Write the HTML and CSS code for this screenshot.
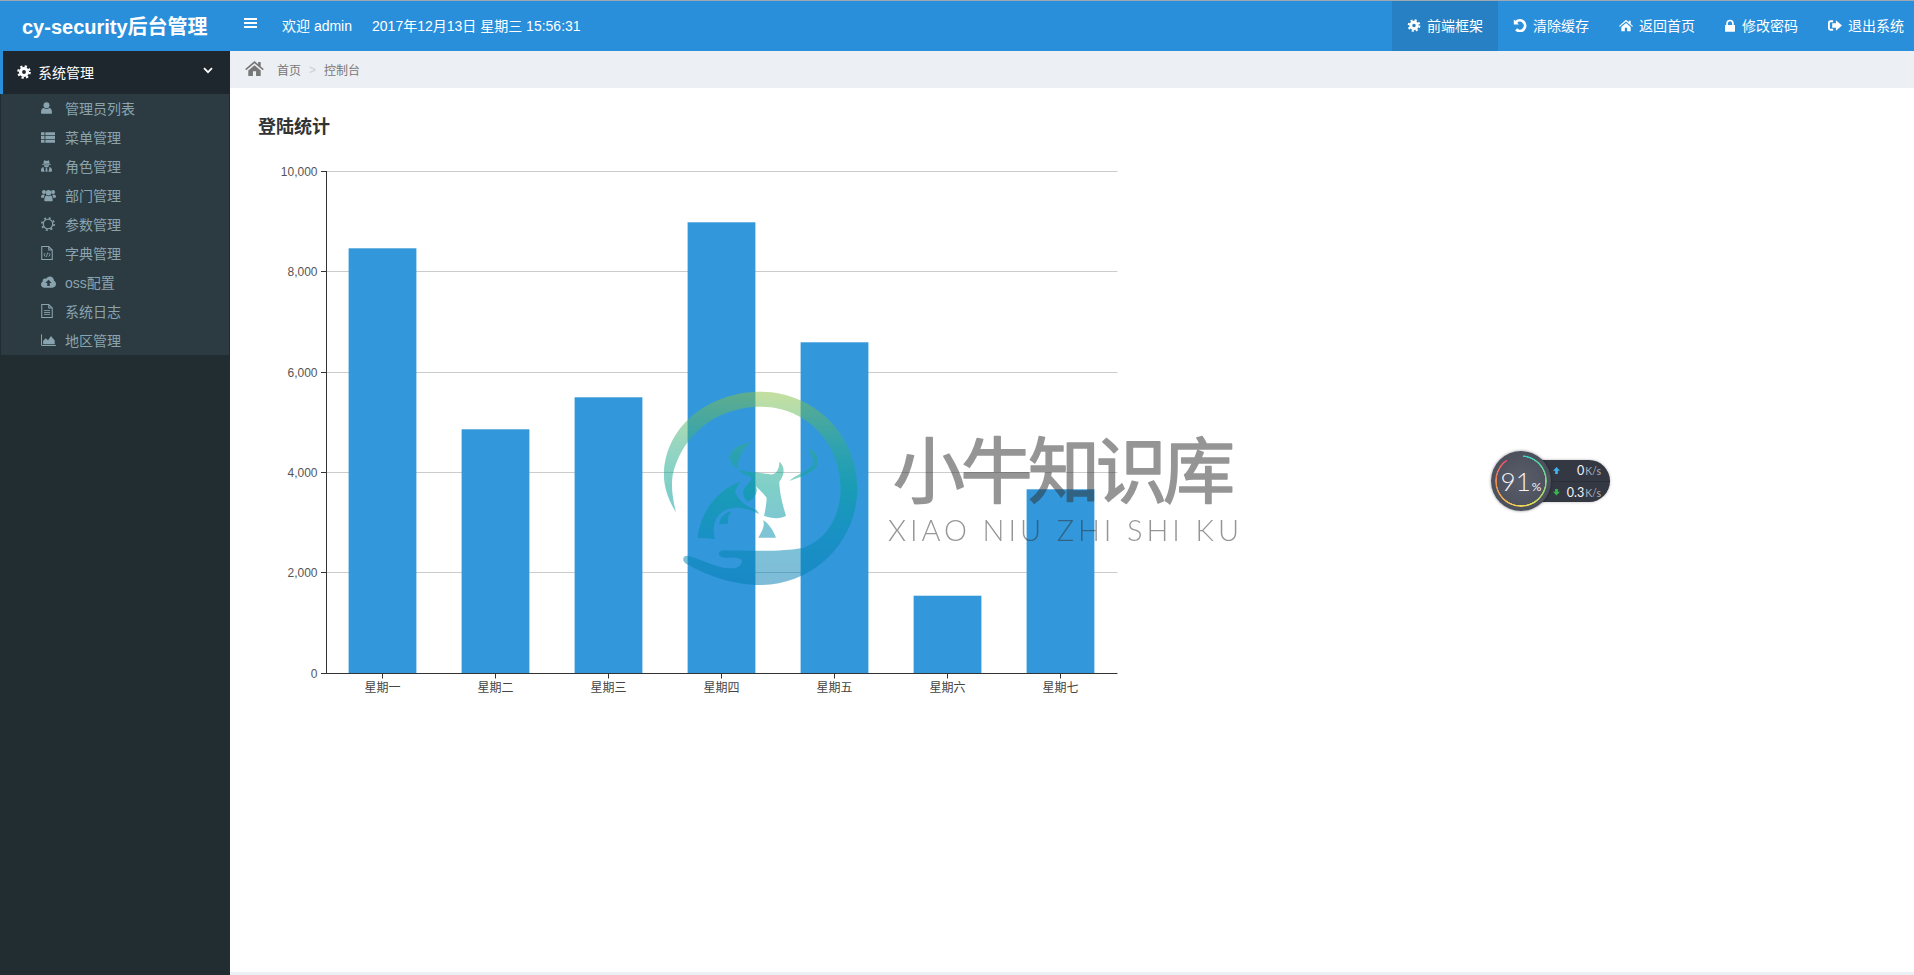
FILE: index.html
```html
<!DOCTYPE html>
<html lang="zh">
<head>
<meta charset="utf-8">
<title>cy-security后台管理</title>
<link rel="stylesheet" href="styles.css">
</head>
<body>
<svg class="defs" width="0" height="0" aria-hidden="true">
  <symbol id="i-gear" viewBox="0 0 16 16"><circle cx="8" cy="8" r="4" fill="none" stroke="currentColor" stroke-width="3.6"/><circle cx="8" cy="8" r="6.6" fill="none" stroke="currentColor" stroke-width="2.4" stroke-dasharray="2.6 2.58"/></symbol>
  <symbol id="i-user" viewBox="1 .8 14 14.400"><circle cx="8" cy="4.6" r="3.800" fill="currentColor"/><path d="M2 15.200c-.6 0-1-.5-1-1.200C1 10.600 2.300 8 4.600 8c1 .8 2.100 1.200 3.400 1.200S10.400 8.800 11.400 8C13.700 8 15 10.600 15 14c0 .7-.4 1.200-1 1.200z" fill="currentColor"/></symbol>
  <symbol id="i-list" viewBox="0 2 16 12"><path d="M0 2h4v3.400H0zM5 2h11v3.400H5zM0 6.300h4v3.400H0zM5 6.300h11v3.400H5zM0 10.600h4V14H0zM5 10.600h11V14H5z" fill="currentColor"/></symbol>
  <symbol id="i-secret" viewBox="1.200 1.500 13.600 14"><path d="M5 1.500 8 2.300l3-.8 1 4.200H4zM2.500 6h11v1h-11zM4.700 7.600h6.600c0 1.400-1.400 2.600-3.300 2.600S4.700 9 4.700 7.600zM2 15.500c-.5 0-.8-.4-.8-1 0-2.400.8-4.300 3-4.700L5.500 15.500zM14 15.500c.5 0 .8-.4.8-1 0-2.400-.8-4.300-3-4.700l-1.300 5.700zM7.200 11h1.600l.5 4.500H6.700z" fill="currentColor"/></symbol>
  <symbol id="i-users" viewBox="0 1.500 18 13.700"><circle cx="3.500" cy="4" r="2.400" fill="currentColor"/><circle cx="14.500" cy="4" r="2.400" fill="currentColor"/><circle cx="9" cy="5" r="3.300" fill="currentColor"/><path d="M0 10.500C0 8.500.8 7 2.500 7c.8.5 1.500.6 2.200.5-.6.8-1 1.800-1.100 3.500H1C.4 11 0 10.900 0 10.500zM18 10.500c0-2-.8-3.500-2.500-3.500-.8.5-1.500.6-2.200.5.6.8 1 1.800 1.100 3.500H17c.6 0 1-.1 1-.5zM5.300 15.200c-.8 0-1.300-.5-1.300-1.200C4 11 4.800 8.400 6.500 8.400c.8.6 1.600.9 2.500.9s1.700-.3 2.500-.9c1.700 0 2.500 2.600 2.500 5.600 0 .7-.5 1.200-1.300 1.200z" fill="currentColor"/></symbol>
  <symbol id="i-sun" viewBox="0 0 16 16"><circle cx="8" cy="8" r="5.400" fill="none" stroke="currentColor" stroke-width="1.300"/><circle cx="8" cy="8" r="7" fill="none" stroke="currentColor" stroke-width="1.800" stroke-dasharray="2.400 3.100"/></symbol>
  <symbol id="i-code" viewBox=".4 0 13.200 16"><path d="M1 .6h8l4 4v10.800H1zM9 .6v4h4" fill="none" stroke="currentColor" stroke-width="1.200"/><path d="M5 8 3.500 10 5 12M9 8l1.500 2L9 12M7.800 7.500 6.200 12.500" fill="none" stroke="currentColor"/></symbol>
  <symbol id="i-cloud" viewBox="0 0 18 13.500"><path fill-rule="evenodd" d="M4 13.500C1.800 13.500 0 11.800 0 9.600 0 8 .9 6.700 2.200 6 2.100 5.700 2.100 5.400 2.100 5.100 2.100 3.600 3.300 2.500 4.800 2.500c.5 0 1 .1 1.400.4C7 1.200 8.700 0 10.700 0c2.700 0 4.900 2.200 4.900 4.900v.4C17 6 18 7.500 18 9.200c0 2.400-1.900 4.300-4.300 4.300zM9 4 5.200 8H7.500v3.500h3V8h2.300z" fill="currentColor"/></symbol>
  <symbol id="i-file" viewBox=".4 0 13.200 16"><path d="M1 .6h8l4 4v10.800H1zM9 .6v4h4" fill="none" stroke="currentColor" stroke-width="1.200"/><path d="M3.500 7.500h7M3.500 9.700h7M3.500 11.900h7" stroke="currentColor"/></symbol>
  <symbol id="i-area" viewBox="0 .5 18 14.500"><path d="M.6 1v13.400H18" fill="none" stroke="currentColor" stroke-width="1.200"/><path d="M2.500 13V9l3-3.500 3 2.500 3.500-5 4.500 5.500V13z" fill="currentColor"/></symbol>
  <symbol id="i-undo" viewBox="1.800 1.500 12.900 13.200"><path d="M2 2v5.200h5.200L5.400 5.400A3.900 3.900 0 1 1 5.300 11L3.300 13.200A6.800 6.800 0 1 0 3.400 3.400z" fill="currentColor"/></symbol>
  <symbol id="i-home" viewBox="0 1 18 14.500"><path d="M9 1 0 8.800l1 1.200L9 3.200l8 6.800 1-1.200-3-2.600V2h-2.500v2.200zM3 10.200 9 5l6 5.200V15.500h-4.500V11h-3v4.500H3z" fill="currentColor"/></symbol>
  <symbol id="i-lock" viewBox="0 0 12 15"><path fill-rule="evenodd" d="M1.500 7V5a4.500 4.500 0 0 1 9 0v2h1c.3 0 .5.200.5.500v7c0 .3-.2.500-.5.500H.5c-.3 0-.5-.2-.5-.5v-7C0 7.200.2 7 .5 7zM3.500 7h5V5a2.500 2.500 0 0 0-5 0z" fill="currentColor"/></symbol>
  <symbol id="i-out" viewBox="1 2.500 15 11"><path d="M6.500 3.500H3.500C2.700 3.500 2 4.200 2 5v6c0 .8.700 1.500 1.500 1.500h3" fill="none" stroke="currentColor" stroke-width="2"/><path d="M9.500 2.500 16 8l-6.500 5.500V10.400H5.500V5.600h4z" fill="currentColor"/></symbol>
</svg>

<header class="topbar">
  <div class="brand">cy-security后台管理</div>
  <div class="toggle"><span></span><span></span><span></span></div>
  <div class="welcome">欢迎 admin</div>
  <div class="clock">2017年12月13日 星期三 15:56:31</div>
  <nav class="topnav">
    <a class="topnav-item is-active"><svg class="ti"><use href="#i-gear"/></svg>前端框架</a>
    <a class="topnav-item"><svg class="ti"><use href="#i-undo"/></svg>清除缓存</a>
    <a class="topnav-item"><svg class="ti"><use href="#i-home"/></svg>返回首页</a>
    <a class="topnav-item"><svg class="ti ti-lock"><use href="#i-lock"/></svg>修改密码</a>
    <a class="topnav-item"><svg class="ti"><use href="#i-out"/></svg>退出系统</a>
  </nav>
</header>

<div class="shell">
  <aside class="sidebar">
    <div class="group-head">
      <svg class="gh-icon"><use href="#i-gear"/></svg>
      <span class="gh-text">系统管理</span>
      <svg class="gh-chev" viewBox="0 0 10 7"><path d="M1 1.200 5 5.200l4-4" fill="none" stroke="currentColor" stroke-width="1.700"/></svg>
    </div>
    <ul class="submenu">
      <li><svg class="si si-user"><use href="#i-user"/></svg>管理员列表</li>
      <li><svg class="si si-list"><use href="#i-list"/></svg>菜单管理</li>
      <li><svg class="si si-user"><use href="#i-secret"/></svg>角色管理</li>
      <li><svg class="si si-users"><use href="#i-users"/></svg>部门管理</li>
      <li><svg class="si si-sun"><use href="#i-sun"/></svg>参数管理</li>
      <li><svg class="si si-file"><use href="#i-code"/></svg>字典管理</li>
      <li><svg class="si si-cloud"><use href="#i-cloud"/></svg>oss配置</li>
      <li><svg class="si si-file"><use href="#i-file"/></svg>系统日志</li>
      <li><svg class="si si-cloud"><use href="#i-area"/></svg>地区管理</li>
    </ul>
  </aside>

  <main class="main">
    <div class="crumbs">
      <svg class="crumb-home"><use href="#i-home"/></svg>
      <span>首页</span>
      <span class="crumb-sep">&gt;</span>
      <span>控制台</span>
    </div>
    <section class="content">
      <h3 class="panel-title">登陆统计</h3>
      <svg class="chart" width="900" height="560" viewBox="230 150 900 560">
        <g class="grid">
          <path d="M326.500 171.500H1117.500M326.500 271.500H1117.500M326.500 372.500H1117.500M326.500 472.500H1117.500M326.500 572.500H1117.500"/>
        </g>
        <g class="bars">
          <rect x="348.600" y="248.300" width="67.800" height="424.700"/>
          <rect x="461.600" y="429.300" width="67.800" height="243.700"/>
          <rect x="574.600" y="397.300" width="67.800" height="275.700"/>
          <rect x="687.600" y="222.300" width="67.800" height="450.700"/>
          <rect x="800.600" y="342.300" width="67.800" height="330.700"/>
          <rect x="913.600" y="595.700" width="67.800" height="77.300"/>
          <rect x="1026.600" y="489.300" width="67.800" height="183.700"/>
        </g>
        <g class="axis">
          <path d="M326.500 171V673.500M321 673.500H1117.500M321 171.500H326.500M321 271.500H326.500M321 372.500H326.500M321 472.500H326.500M321 572.500H326.500"/>
          <path d="M382.500 673.500V678.500M495.500 673.500V678.500M608.500 673.500V678.500M721.500 673.500V678.500M834.500 673.500V678.500M947.500 673.500V678.500M1060.500 673.500V678.500"/>
        </g>
        <g class="ylabels">
          <text x="317.500" y="176">10,000</text>
          <text x="317.500" y="276">8,000</text>
          <text x="317.500" y="377">6,000</text>
          <text x="317.500" y="477">4,000</text>
          <text x="317.500" y="577">2,000</text>
          <text x="317.500" y="677.500">0</text>
        </g>
        <g class="xlabels">
          <text x="382.500" y="692">星期一</text>
          <text x="495.500" y="692">星期二</text>
          <text x="608.500" y="692">星期三</text>
          <text x="721.500" y="692">星期四</text>
          <text x="834.500" y="692">星期五</text>
          <text x="947.500" y="692">星期六</text>
          <text x="1060.500" y="692">星期七</text>
        </g>
      </svg>
    </section>

    <svg class="watermark" width="590" height="210" viewBox="660 385 590 210">
      <defs>
        <linearGradient id="wm-grad" gradientUnits="userSpaceOnUse" x1="0" y1="20" x2="0" y2="600">
          <stop offset="0" stop-color="#8cc242"/>
          <stop offset=".28" stop-color="#2fae84"/>
          <stop offset=".5" stop-color="#00a092"/>
          <stop offset=".75" stop-color="#008bb0"/>
          <stop offset="1" stop-color="#007ab2"/>
        </linearGradient>
      </defs>
      <g class="wm-logo" transform="translate(660 385) scale(.3333)">
        <path d="M48 382C22 340 10 300 12 262C18 120 150 20 302 20C462 20 592 150 592 310C592 470 462 600 302 600C210 600 130 565 78 536C64 528 68 510 85 513C120 520 170 550 210 550C235 552 250 535 244 524C238 516 215 520 195 518C170 516 170 496 195 496C270 498 370 500 430 488C500 465 542 390 542 310C542 175 440 65 302 65C170 65 65 150 38 270C32 310 40 350 48 382Z"/>
        <path d="M275 172C235 178 208 195 210 220C212 250 250 262 285 262L330 268C345 270 358 258 358 230C372 240 378 265 358 290C358 320 368 360 378 392C365 402 335 402 312 392C318 370 320 345 320 338C305 320 295 310 286 303C300 318 280 345 262 350C245 335 245 310 262 300C270 290 285 275 262 272C235 262 225 240 240 218C245 200 260 180 275 172Z"/>
        <path d="M445 190C470 200 480 225 470 245C455 265 420 275 388 288C405 270 440 262 460 240C465 225 450 210 445 190Z"/>
        <path d="M240 290C175 315 125 370 112 458L165 462C155 425 165 385 205 372C235 362 270 372 298 388L290 375C255 365 230 340 225 318Z"/>
        <path d="M215 378C190 385 178 400 178 418L205 416C203 400 205 390 215 378Z"/>
        <path d="M310 405C315 425 305 440 295 458L348 458C340 435 325 415 310 405Z"/>
      </g>
      <text class="wm-cn" x="893" y="497" textLength="342" lengthAdjust="spacing">小牛知识库</text>
      <text class="wm-en" x="888" y="541" textLength="351" lengthAdjust="spacing">XIAO NIU ZHI SHI KU</text>
    </svg>

    <div class="netspeed">
      <div class="ns-pill">
        <div class="ns-row"><span class="ns-up"></span><span class="ns-val">0<small>K/s</small></span></div>
        <div class="ns-row"><span class="ns-down"></span><span class="ns-val">0.3<small>K/s</small></span></div>
      </div>
      <div class="ns-gauge">
        <div class="ns-ring"></div>
        <span class="ns-num">91<small>%</small></span>
      </div>
    </div>
  </main>
</div>
</body>
</html>
```
FILE: styles.css
```css
* { box-sizing: border-box; }
html, body { margin: 0; height: 100%; overflow: hidden; }
body {
  font-family: "Liberation Sans", "Noto Sans CJK SC", sans-serif;
  font-size: 14px;
  color: #333;
  background: #fff;
  display: flex;
  flex-direction: column;
}
.defs { position: absolute; }

/* top bar */
.topbar {
  flex: none;
  height: 51px;
  border-top: 1px solid #9fa8b0;
  background: #2a8fdb;
  color: #fff;
  display: flex;
  align-items: center;
}
.brand { width: 230px; padding: 0 0 2px 22px; font-size: 20px; font-weight: 700; }
.toggle { width: 13px; margin: 0 0 6px 14px; display: flex; flex-direction: column; gap: 2px; }
.toggle span { height: 2px; background: #fff; }
.welcome { margin: 0 0 2px 25px; }
.clock { margin: 0 0 2px 20px; }
.topnav { margin-left: auto; margin-right: -5px; display: flex; align-self: stretch; }
.topnav-item { padding: 0 15px 2px; display: flex; align-items: center; white-space: nowrap; }
.topnav-item.is-active { background: #2780c3; }
.ti { width: 14px; height: 13px; margin-right: 6px; }
.ti-lock { width: 10px; margin-right: 7px; }

/* layout */
.shell { flex: 1; display: flex; min-height: 0; }

/* sidebar */
.sidebar { flex: none; width: 230px; background: #222d32; }
.group-head {
  height: 43px;
  border-left: 3px solid #2a8fdb;
  background: #1e272e;
  color: #fff;
  display: flex;
  align-items: center;
  padding: 0 17px 1px 14px;
}
.gh-icon { width: 14px; height: 14px; margin-right: 7px; }
.gh-text { flex: 1; }
.gh-chev { width: 10px; height: 7px; margin-bottom: 3px; }
.submenu { list-style: none; margin: 0 1px; padding: 0; background: #2c3b41; color: #8aa4af; }
.submenu li { height: 29px; padding: 0 0 1px 40px; display: flex; align-items: center; }
.si-user { width: 11px; height: 12px; margin-right: 13px; }
.si-list { width: 14px; height: 11px; margin-right: 10px; }
.si-users { width: 15px; height: 13px; margin-right: 9px; }
.si-sun { width: 14px; height: 14px; margin-right: 10px; }
.si-file { width: 12px; height: 14px; margin-right: 12px; }
.si-cloud { width: 15px; height: 12px; margin-right: 9px; }

/* main */
.main { flex: 1; min-width: 0; position: relative; display: flex; flex-direction: column; border-bottom: 3px solid #ecf0f5; }
.crumbs {
  flex: none;
  height: 37px;
  background: #ecf0f5;
  color: #777;
  font-size: 12px;
  display: flex;
  align-items: center;
  padding-left: 15px;
}
.crumb-home { width: 19px; height: 15px; margin-right: 13px; margin-top: -2px; }
.crumb-sep { margin: 0 8px; color: #ccc; }
.content { flex: 1; min-height: 0; }
.panel-title { margin: 27px 0 11px 28px; font-size: 18px; line-height: 24px; font-weight: 700; color: #333; }
.chart { display: block; }
.grid path { stroke: #ccc; fill: none; }
.bars rect { fill: #3398db; }
.axis path { stroke: #333; fill: none; }
.ylabels text { font-size: 12px; fill: #555; text-anchor: end; }
.xlabels text { font-size: 12px; fill: #444; text-anchor: middle; }

/* watermark overlay */
.watermark { position: absolute; left: 430px; top: 334px; opacity: .5; pointer-events: none; }
.wm-logo path { fill: url(#wm-grad); }
.wm-cn { font-family: "Noto Sans CJK SC", sans-serif; font-size: 72px; fill: #2e2e2e; stroke: #2e2e2e; stroke-width: 1.5px; stroke-linejoin: round; }
.wm-en { font-family: "Lato", sans-serif; font-weight: 300; font-size: 29px; fill: #2e2e2e; }

/* network speed widget overlay */
.netspeed { position: absolute; left: 1260px; top: 399px; width: 120px; height: 62px; }
.ns-pill {
  position: absolute;
  left: 36px;
  top: 10px;
  width: 84px;
  height: 42px;
  padding-left: 27px;
  border-radius: 0 21px 21px 0;
  background: #343842;
  box-shadow: 0 0 3px rgba(0, 0, 0, .3);
  color: #f0f4f8;
  font-family: "Lato", sans-serif;
  font-size: 12.5px;
}
.ns-row { height: 21px; display: flex; align-items: center; justify-content: space-between; padding-right: 9px; }
.ns-row + .ns-row { border-top: 1px solid #2b2f38; }
.ns-val small { color: #aab0ba; font-size: 10.5px; margin-left: 1px; }
.ns-up, .ns-down { width: 7px; height: 7px; }
.ns-up { background: #3fb0ef; clip-path: polygon(50% 0, 100% 55%, 70% 55%, 70% 100%, 30% 100%, 30% 55%, 0 55%); }
.ns-down { background: #37b54a; clip-path: polygon(30% 0, 70% 0, 70% 45%, 100% 45%, 50% 100%, 0 45%, 30% 45%); }
.ns-gauge {
  position: absolute;
  left: 1px;
  top: 1px;
  width: 60px;
  height: 60px;
  border-radius: 50%;
  background: radial-gradient(circle, #5a5e6b 0, #4c505c 70%, #5c606c 96%);
  box-shadow: 0 0 3px rgba(0, 0, 0, .45);
  display: flex;
  align-items: center;
  justify-content: center;
  color: #f2f4f6;
}
.ns-ring {
  position: absolute;
  inset: 4px;
  border-radius: 50%;
  background: conic-gradient(transparent 0 4deg, #37d6c4 4deg, #74d68c 80deg, #f0de52 170deg, #f29a4c 250deg, #e84f6c 326deg, transparent 326deg);
  -webkit-mask: radial-gradient(closest-side, transparent calc(100% - 2px), #000 calc(100% - 1.5px));
  mask: radial-gradient(closest-side, transparent calc(100% - 2px), #000 calc(100% - 1.5px));
}
.ns-num { font-family: "Lato", sans-serif; font-weight: 300; font-size: 26px; line-height: 1; }
.ns-num small { font-size: 12px; font-weight: 400; margin-left: 1px; }
```
